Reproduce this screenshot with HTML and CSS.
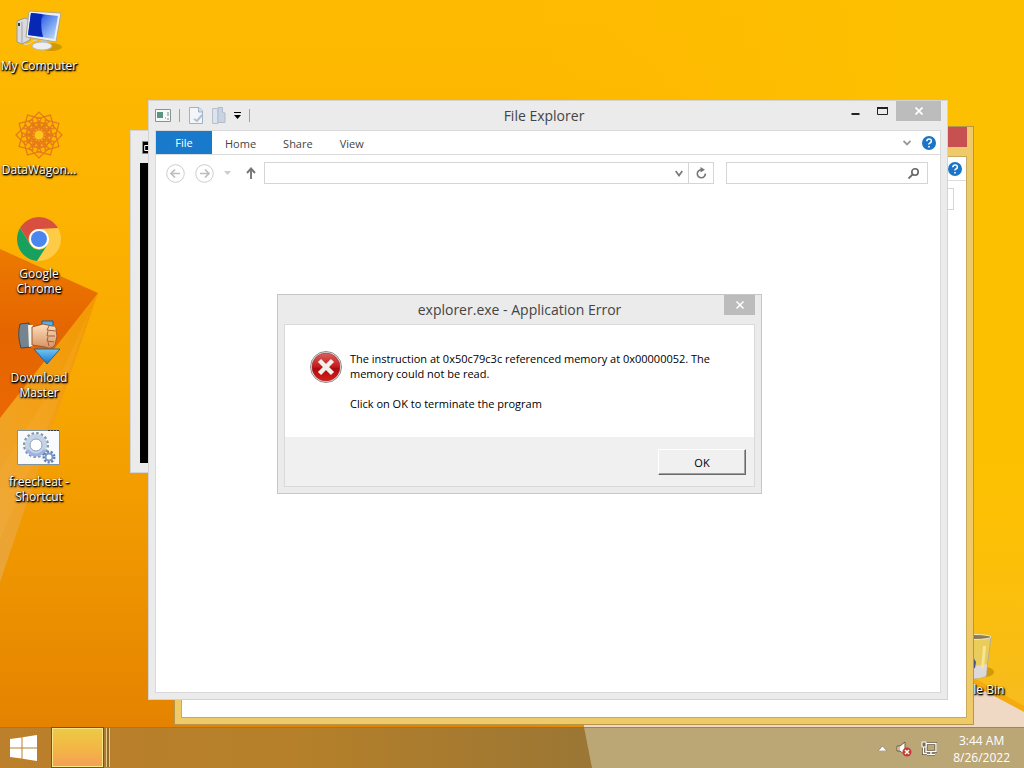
FILE: index.html
```html
<!DOCTYPE html>
<html lang="en">
<head>
<meta charset="utf-8">
<title>Desktop</title>
<link rel="stylesheet" href="styles.css">
</head>
<body>
<main class="desktop">
  <svg class="wallpaper" viewBox="0 0 1024 768" preserveAspectRatio="none" aria-hidden="true">
    <defs>
      <linearGradient id="base" x1="0" y1="0" x2="0" y2="1"><stop offset="0" stop-color="#feba00"/><stop offset=".25" stop-color="#fdb400"/><stop offset=".5" stop-color="#f8a800"/><stop offset=".75" stop-color="#ee9400"/><stop offset="1" stop-color="#e27e00"/></linearGradient>
      <linearGradient id="bright" x1="0" y1="0" x2="1" y2="0"><stop offset=".5" stop-color="#fdbd00" stop-opacity="0"/><stop offset=".88" stop-color="#fdc000"/></linearGradient>
      <linearGradient id="fold" x1="0" y1="0" x2="0" y2="1"><stop offset="0" stop-color="#ec7a00"/><stop offset=".5" stop-color="#e56500"/><stop offset="1" stop-color="#e96804"/></linearGradient>
      <linearGradient id="beam" x1="1" y1="0" x2="0" y2="1"><stop offset="0" stop-color="#f29800"/><stop offset=".6" stop-color="#f3a11b"/><stop offset="1" stop-color="#e9a53a"/></linearGradient>
      <linearGradient id="corner" x1="0" y1="0" x2="0" y2="1"><stop offset="0" stop-color="#fcc200" stop-opacity="0"/><stop offset="1" stop-color="#f5b92c"/></linearGradient>
    </defs>
    <rect width="1024" height="768" fill="url(#base)"/>
    <rect width="1024" height="768" fill="url(#bright)"/>
    <path d="M900 400H1024V768H900z" fill="url(#corner)"/>
    <path d="M98 293L0 418V582z" fill="url(#beam)"/>
    <path d="M94 301L62 372 0 470V540L57 405z" fill="#ffc45a" opacity=".12"/>
    <path d="M0 249L98 293 0 418z" fill="url(#fold)"/>
    <path d="M960 670L1024 706V712L960 678z" fill="#f4ab10"/>
    <path d="M960 678L1024 712V768H584V724H960z" fill="#efd9c4"/>
  </svg>

  <nav class="shortcuts" aria-label="Desktop shortcuts">
    <a class="shortcut" href="#">
      <svg class="shortcut-icon" viewBox="0 0 48 48" aria-hidden="true">
        <defs><linearGradient id="scr" x1="0" y1="0" x2="1" y2=".8"><stop offset="0" stop-color="#0722a4"/><stop offset=".35" stop-color="#123be0"/><stop offset=".4" stop-color="#3f6ee8"/><stop offset="1" stop-color="#b5d6fc"/></linearGradient></defs>
        <ellipse cx="36" cy="39" rx="11" ry="4" fill="#a87800" opacity=".5"/>
        <path d="M2 13L10 10 15 12V32L7 36 2 34z" fill="#d9dade" stroke="#9a9a9c"/><path d="M7 14V35" stroke="#a4a4a8"/><path d="M4 15v3" stroke="#4b3a22" stroke-width="2"/>
        <path d="M9 36C15 38 16 32 22 32" fill="none" stroke="#ddd"/>
        <path d="M26 31L32 32V38H25z" fill="#c7cad2"/><ellipse cx="27" cy="38" rx="10" ry="4" fill="#eceef2" stroke="#b6b7bc"/>
        <path d="M14 3L46 5 41 34 11 29z" fill="#eceef2" stroke="#b1a882"/>
        <path d="M16 5L43 8 39 31 13 27z" fill="url(#scr)"/><path d="M16 5L27 6Q25 18 28 29L13 27z" fill="#0728b4"/>
      </svg>
      <span class="shortcut-label">My Computer</span>
    </a>
    <a class="shortcut" href="#">
      <svg class="shortcut-icon" viewBox="-24 -23 48 48" aria-hidden="true">
        <defs><g id="petal" fill="none" stroke="#e5791c" stroke-width="1.2"><path d="M-10 -13L0 -23L10 -13L0 -7z"/><path d="M-6 -10L0 -14L6 -10L0 -4z"/></g></defs>
        <use href="#petal"/><use href="#petal" transform="rotate(30)"/><use href="#petal" transform="rotate(60)"/><use href="#petal" transform="rotate(90)"/><use href="#petal" transform="rotate(120)"/><use href="#petal" transform="rotate(150)"/><use href="#petal" transform="rotate(180)"/><use href="#petal" transform="rotate(210)"/><use href="#petal" transform="rotate(240)"/><use href="#petal" transform="rotate(270)"/><use href="#petal" transform="rotate(300)"/><use href="#petal" transform="rotate(330)"/>
        <circle r="4.500" fill="#ffc41c"/>
      </svg>
      <span class="shortcut-label">DataWagon...</span>
    </a>
    <a class="shortcut" href="#">
      <svg class="shortcut-icon" viewBox="-24 -23 48 48" aria-hidden="true">
        <circle r="22" fill="#fdcb45"/>
        <path d="M-19 -11A22 22 0 0 1 19 -11L0 -10A10 10 0 0 0 -9 5z" fill="#d94f3f"/>
        <path d="M-19 -11A22 22 0 0 0 -2 22L9 5A10 10 0 0 1 -9 5z" fill="#17a05e"/>
        <circle r="10" fill="#fff"/><circle r="8" fill="#4a86ee"/>
      </svg>
      <span class="shortcut-label">Google Chrome</span>
    </a>
    <a class="shortcut" href="#">
      <svg class="shortcut-icon" viewBox="0 7 48 48" aria-hidden="true">
        <defs><linearGradient id="hand" x1="0" y1="0" x2="0" y2="1"><stop offset="0" stop-color="#fbe0bd"/><stop offset="1" stop-color="#d99262"/></linearGradient><linearGradient id="arr" x1="0" y1="0" x2="0" y2="1"><stop offset="0" stop-color="#72c7f5"/><stop offset="1" stop-color="#1873c9"/></linearGradient></defs>
        <path d="M27 8H38V15H27z" fill="#4fb0ea" stroke="#285985"/>
        <path d="M19 36H45L32 51z" fill="url(#arr)" stroke="#28648c"/>
        <path d="M5 11L14 10 16 34 6 35Q2 22 5 11z" fill="#75858f" stroke="#3f4a51"/><path d="M13 12L18 12V33L14 34z" fill="#f7f2e8"/>
        <path d="M17 14L28 11 37 13Q42 12 41 18L42 23 40 32Q36 37 30 34L17 32z" fill="url(#hand)" stroke="#9c5732"/>
        <path d="M34 13l-2 4 8 1M33 18l-1 5 8 0M33 24l-1 4 7 1M33 29l1 4" fill="none" stroke="#a05c38"/>
      </svg>
      <span class="shortcut-label">Download Master</span>
    </a>
    <a class="shortcut" href="#">
      <svg class="shortcut-icon" viewBox="0 -1 48 48" aria-hidden="true">
        <path d="M2.500 5.500H44.500V39.500H2.500z" fill="#f8fafb" stroke="#8195a0"/><path d="M33 5.500h12" stroke="#333" stroke-dasharray="2 1"/>
        <circle cx="21" cy="20" r="11.500" fill="none" stroke="#8196a8" stroke-width="3" stroke-dasharray="2.500 2"/>
        <circle cx="21" cy="20" r="8.500" fill="none" stroke="#c5d3e6" stroke-width="5"/><circle cx="21" cy="20" r="6" fill="#fff" stroke="#8da0b8"/>
        <path d="M12 25Q21 35 30 25" stroke="#9fb0e6" stroke-width="3" fill="none"/>
        <circle cx="34" cy="32" r="5" fill="none" stroke="#6680ad" stroke-width="3" stroke-dasharray="2 1.500"/><circle cx="34" cy="32" r="3.500" fill="#fff" stroke="#7b9bc9" stroke-width="2"/>
      </svg>
      <span class="shortcut-label">freecheat - Shortcut</span>
    </a>
  </nav>

  <a class="shortcut recycle" href="#">
    <svg class="shortcut-icon" viewBox="0 0 48 48" aria-hidden="true">
      <ellipse cx="36" cy="40" rx="9" ry="5" fill="#a87700" opacity=".5"/>
      <path d="M7 5H42L37 44Q25 49 12 44z" fill="#e9cc5c" stroke="#b8ae8c"/><path d="M11 32L26 34 38 32 37 44Q25 49 12 44z" fill="#dcd8dc"/>
      <path d="M34 14L37 14 35 36 32 37z" fill="#f8e58c"/><ellipse cx="25" cy="5" rx="17" ry="2.500" fill="#8d7b50" stroke="#eee7d4"/>
      <path d="M24 25L27 30 26 36 23 37z" fill="#4a5282"/>
    </svg>
    <span class="shortcut-label">Recycle Bin</span>
  </a>

  <section class="window console" aria-label="Console">
    <header class="console-title">
      <svg width="13" height="13" viewBox="0 0 13 13" aria-hidden="true"><path d="M.5.500H12.500V12.500H.5z" stroke="#888"/><path d="M6 4.500H2.700V9.500H6M8 5v1M8 8v1" stroke="#fff" fill="none"/></svg>
    </header>
    <div class="console-screen"></div>
  </section>

  <section class="window back" aria-label="File Explorer, background">
    <header class="back-title"><button class="close close-red" aria-label="Close"></button></header>
    <div class="back-body">
      <div class="back-ribbon"><button class="plain" aria-label="Help"><svg width="14" height="14" viewBox="0 0 14 14" aria-hidden="true"><circle cx="7" cy="7" r="7" fill="#1b74c5"/><path d="M4.800 5.200Q5 3 7.200 3T9.300 5.200Q9.300 6.300 8 7T7 8.600M7 10v1.500" fill="none" stroke="#fff" stroke-width="1.600"/></svg></button></div>
      <div class="back-address"><input class="field back-search" aria-label="Search"></div>
    </div>
  </section>

  <section class="window explorer" aria-labelledby="explorer-title">
    <header class="titlebar">
      <div class="quick">
        <svg width="16" height="13" viewBox="0 0 16 13" aria-hidden="true"><path d="M.5.500H15.500V12.500H.5z" fill="#f7f9f8" stroke="#82968d"/><path d="M2 3H8V9H2z" fill="#5c947e"/><path d="M10 9h1M13 3v4M12 10h2" stroke="#7c8c86"/></svg>
        <span class="divider"></span>
        <button class="plain" aria-label="Properties"><svg width="16" height="17" viewBox="0 0 16 17" aria-hidden="true"><path d="M1.500.500H11L14.500 4V16.500H1.500z" fill="#f2f5f9" stroke="#a3b1c4"/><path d="M10.500 1V5H14" fill="#d0dae8" stroke="#a3b1c4"/><path d="M6 12l3 2 5-6" fill="none" stroke="#b4bfd0" stroke-width="2"/></svg></button>
        <button class="plain" aria-label="New folder"><svg width="14" height="17" viewBox="0 0 14 17" aria-hidden="true"><path d="M.5 1.500H6V16.500H.5z" fill="#dce3ed" stroke="#b6c0cf"/><path d="M6 .5H10.500V5L13 6V15.500H6z" fill="#cad3e2" stroke="#b1bccc"/></svg></button>
        <button class="plain" aria-label="Customize toolbar"><svg width="7" height="7" viewBox="0 0 7 7" aria-hidden="true"><path d="M0 .5H7" stroke="#000"/><path d="M0 3H7L3.500 7z"/></svg></button>
        <span class="divider"></span>
      </div>
      <h1 class="title" id="explorer-title">File Explorer</h1>
      <div class="controls">
        <button class="control" aria-label="Minimize"><svg width="11" height="10" viewBox="0 0 11 10" aria-hidden="true"><path d="M1.500 8H9.500" stroke="#222" stroke-width="2"/></svg></button>
        <button class="control" aria-label="Maximize"><svg width="11" height="8" viewBox="0 0 11 8" aria-hidden="true"><path d="M.5 1H10.500V7.500H.5z" fill="none" stroke="#222"/><path d="M0 1H11" stroke="#222" stroke-width="2"/></svg></button>
        <button class="close" aria-label="Close"><svg width="8" height="8" viewBox="0 0 8 8" aria-hidden="true"><path d="M.5.500L7.500 7.500M7.500.500L.5 7.500" stroke="#fff" stroke-width="1.700"/></svg></button>
      </div>
    </header>
    <div class="explorer-body">
      <nav class="ribbon" aria-label="Ribbon">
        <button class="tab tab-file">File</button>
        <button class="tab">Home</button>
        <button class="tab">Share</button>
        <button class="tab">View</button>
        <div class="ribbon-end">
          <button class="plain" aria-label="Expand ribbon"><svg width="8" height="6" viewBox="0 0 8 6" aria-hidden="true"><path d="M.5 1L4 4.500 7.500 1" fill="none" stroke="#999" stroke-width="1.800"/></svg></button>
          <button class="plain" aria-label="Help"><svg width="14" height="14" viewBox="0 0 14 14" aria-hidden="true"><circle cx="7" cy="7" r="7" fill="#1b74c5"/><path d="M4.800 5.200Q5 3 7.200 3T9.300 5.200Q9.300 6.300 8 7T7 8.600M7 10v1.500" fill="none" stroke="#fff" stroke-width="1.600"/></svg></button>
        </div>
      </nav>
      <div class="navbar">
        <button class="plain" aria-label="Back"><svg width="19" height="19" viewBox="0 0 19 19" aria-hidden="true"><circle cx="9.500" cy="9.500" r="8.800" fill="#fff" stroke="#ccc"/><path d="M14 9.500H5.500M9 5.500L5 9.500 9 13.500" fill="none" stroke="#bdbdbd" stroke-width="1.700"/></svg></button>
        <button class="plain" aria-label="Forward"><svg width="19" height="19" viewBox="0 0 19 19" aria-hidden="true"><circle cx="9.500" cy="9.500" r="8.800" fill="#fff" stroke="#ccc"/><path d="M5 9.500H13.500M10 5.500L14 9.500 10 13.500" fill="none" stroke="#bdbdbd" stroke-width="1.700"/></svg></button>
        <button class="plain" aria-label="Recent locations"><svg width="7" height="4" viewBox="0 0 7 4" aria-hidden="true"><path d="M0 0H7L3.500 4z" fill="#ccc"/></svg></button>
        <button class="plain up" aria-label="Up"><svg width="10" height="12" viewBox="0 0 10 12" aria-hidden="true"><path d="M5 12V1.500M1 6L5 1.500 9 6" fill="none" stroke="#777" stroke-width="1.900"/></svg></button>
        <div class="address">
          <input class="address-input" aria-label="Address">
          <button class="plain address-drop" aria-label="Previous locations"><svg width="8" height="7" viewBox="0 0 8 7" aria-hidden="true"><path d="M.7 1L4 5.500 7.300 1" fill="none" stroke="#777" stroke-width="1.700"/></svg></button>
          <button class="plain refresh" aria-label="Refresh"><svg width="11" height="12" viewBox="0 0 11 12" aria-hidden="true"><path d="M9.300 6.500A4 4 0 1 1 5.500 2.800" fill="none" stroke="#777" stroke-width="1.600"/><path d="M4.500 0L9 2.800 4.500 5.500z" fill="#777"/></svg></button>
        </div>
        <div class="search">
          <input class="address-input" aria-label="Search">
          <button class="plain" aria-label="Search"><svg width="11" height="11" viewBox="0 0 11 11" aria-hidden="true"><circle cx="7" cy="4" r="3.200" fill="none" stroke="#666" stroke-width="1.600"/><path d="M4.700 6.300L.5 10.500" stroke="#666" stroke-width="1.800"/></svg></button>
        </div>
      </div>
    </div>
  </section>

  <section class="window dialog" role="alertdialog" aria-labelledby="error-title">
    <header class="titlebar">
      <span></span>
      <h2 class="title" id="error-title">explorer.exe - Application Error</h2>
      <div class="controls"><button class="close close-small" aria-label="Close"><svg width="8" height="8" viewBox="0 0 8 8" aria-hidden="true"><path d="M.5.500L7.500 7.500M7.500.500L.5 7.500" stroke="#fff" stroke-width="1.500"/></svg></button></div>
    </header>
    <div class="dialog-body">
      <div class="message">
        <svg class="error-icon" width="32" height="32" viewBox="0 0 32 32" aria-hidden="true"><defs><linearGradient id="red" x1="0" y1="0" x2="0" y2="1"><stop offset="0" stop-color="#d9605c"/><stop offset=".5" stop-color="#c41b1c"/><stop offset=".55" stop-color="#ad0a0c"/><stop offset="1" stop-color="#d8201c"/></linearGradient></defs><circle cx="16" cy="16" r="15.500" fill="#eee" stroke="#8b8b8b"/><circle cx="16" cy="16" r="14" fill="url(#red)" stroke="#a02020" stroke-width=".5"/><path d="M9.500 9.500L22.500 22.500M22.500 9.500L9.500 22.500" stroke="#f1f1ec" stroke-width="4.500"/></svg>
        <div class="message-text">
          <p>The instruction at 0x50c79c3c referenced memory at 0x00000052. The memory could not be read.</p>
          <p>Click on OK to terminate the program</p>
        </div>
      </div>
      <footer class="dialog-footer"><button class="ok">OK</button></footer>
    </div>
  </section>
</main>

<footer class="taskbar">
  <svg class="taskbar-back" viewBox="0 0 1024 41" preserveAspectRatio="none" aria-hidden="true">
    <defs><linearGradient id="barL" x1="0" y1="0" x2="1" y2="0"><stop offset="0" stop-color="#bc7f2c"/><stop offset=".5" stop-color="#b58029"/><stop offset="1" stop-color="#9b7635"/></linearGradient></defs>
    <rect width="1024" height="41" fill="#bba676"/><path d="M0 0H584L592 41H0z" fill="url(#barL)"/><path d="M0 .5H1024" stroke="#946f35" opacity=".6"/>
  </svg>
  <button class="plain start" aria-label="Start"><svg width="27" height="26" viewBox="0 0 27 26" aria-hidden="true"><path d="M0 4L11.500 2.400V12.400H0zM12.500 2.200L27 0V12.400H12.500zM0 13.400H11.500V23.600L0 22zM12.500 13.400H27V26L12.500 23.800z" fill="#fff"/></svg></button>
  <button class="task" aria-label="File Explorer windows"></button>
  <div class="tray">
    <button class="plain" aria-label="Show hidden icons"><svg width="9" height="5" viewBox="0 0 9 5" aria-hidden="true"><path d="M0 5L4.500 0 9 5z" fill="#fff" stroke="#6c5f43" stroke-width=".5"/></svg></button>
    <button class="plain" aria-label="Volume muted"><svg width="16" height="16" viewBox="0 0 16 16" aria-hidden="true"><path d="M1 5H4L9 1V14L4 10H1z" fill="#fff" stroke="#6f5b40"/><path d="M3 5V10" stroke="#8c7c5c"/><circle cx="11" cy="11" r="4.500" fill="#c43d35"/><path d="M9 9l4 4M13 9l-4 4" stroke="#fff" stroke-width="1.500"/></svg></button>
    <button class="plain" aria-label="Network"><svg width="16" height="15" viewBox="0 0 16 15" aria-hidden="true"><path d="M5 2.500H15V10.500H5zM10 11V13.500M6 13.500H14M2.500 6V12.500H6" fill="none" stroke="#5f5238" stroke-width="3"/><path d="M5 2.500H15V10.500H5zM10 11V13.500M6 13.500H14M2.500 6V12.500H6" fill="none" stroke="#fff" stroke-width="1.400"/><path d="M1 1H5V6H1z" fill="#7b6c4c" stroke="#fff"/></svg></button>
    <time class="clock" datetime="2022-08-26T03:44">3:44 AM<br>8/26/2022</time>
  </div>
</footer>
</body>
</html>
```
FILE: styles.css
```css
* { box-sizing: border-box; }
body { margin: 0; height: 100vh; overflow: hidden; font: 11px/15px "Open Sans", "Noto Sans", sans-serif; color: #000; background: #feba00; }
button, input { font: inherit; color: inherit; border: 0; padding: 0; margin: 0; background: none; border-radius: 0; min-width: 0; }
svg { display: block; flex: none; }
h1, h2, p { margin: 0; font-weight: 400; }

.desktop { position: absolute; inset: 0; }
.wallpaper { position: absolute; inset: 0; width: 100%; height: 100%; }
.shortcuts { position: relative; display: flex; flex-direction: column; width: 78px; padding-top: 8px; }
.shortcut { display: flex; flex-direction: column; align-items: center; gap: 2px; height: 104px; color: #fff; text-align: center; text-decoration: none; }
.shortcut-icon { width: 48px; height: 48px; overflow: visible; }
.shortcut-label { width: 78px; font-size: 12px; line-height: 15px; text-shadow: 1px 1px 2px #000, 0 1px 2px #000, 1px 1px 1px #000; }
.recycle { position: absolute; right: 12px; bottom: 32px; width: 78px; }

.window { position: absolute; display: flex; flex-direction: column; background: #ebebeb; border: 1px solid #d3d3d3; }
.console { left: 130px; top: 130px; width: 677px; height: 343px; padding: 0 9px 9px; }
.console-title { display: flex; align-items: center; height: 32px; padding-left: 2px; }
.console-screen { flex: 1; background: #000; }

.back { inset: 126px 50px 43px 174px; padding: 0 6px 6px; background: #efca69; border-color: #b6954c; }
.back-title { display: flex; justify-content: flex-end; height: 29px; }
.back-body { flex: 1; background: #fff; border: 1px solid #c8a95d; }
.back-ribbon { display: flex; align-items: center; justify-content: flex-end; height: 24px; padding-right: 4px; border-bottom: 1px solid #ddd; }
.back-address { display: flex; justify-content: flex-end; padding: 7px 12px; }
.field { border: 1px solid #d5d5d5; background: #fff; }
.back-search { width: 200px; height: 22px; }

.explorer { inset: 100px 76px 68px 148px; padding: 0 6px 6px; }
.titlebar { display: grid; grid-template-columns: 1fr auto 1fr; height: 29px; }
.quick { display: flex; align-items: center; gap: 8px; }
.divider { width: 1px; height: 13px; background: #a0a0a0; }
.title { padding-right: 8px; font-size: 14px; line-height: 29px; color: #444; white-space: nowrap; }
.controls { display: flex; justify-content: flex-end; align-items: flex-start; }
.control { display: grid; place-items: center; width: 27px; height: 20px; }
.close { display: grid; place-items: center; width: 45px; height: 20px; background: #bcbcbc; }
.close-red { background: #c75050; }
.close-small { width: 31px; }
.plain { display: grid; place-items: center; }

.explorer-body { flex: 1; background: #fff; border: 1px solid #d9d9d9; }
.ribbon { display: flex; height: 24px; border-bottom: 1px solid #dadada; }
.tab { padding: 2px 14px 0 13px; line-height: 22px; color: #444; }
.tab-file { width: 56px; padding: 0; color: #fff; background: #1979ca; }
.ribbon-end { display: flex; align-items: center; gap: 11px; margin-left: auto; padding-right: 4px; }
.navbar { display: flex; align-items: center; gap: 10px; padding: 7px 12px 7px 10px; }
.up { margin: 0 -2px 0 5px; }
.address { display: flex; flex: 1; height: 22px; border: 1px solid #d5d5d5; }
.address-input { flex: 1; width: 0; }
.address-drop { width: 18px; }
.refresh { width: 25px; border-left: 1px solid #d5d5d5; }
.search { display: flex; width: 202px; height: 22px; margin-left: 2px; padding-right: 8px; border: 1px solid #d5d5d5; }

.dialog { left: 277px; top: 294px; width: 485px; padding: 0 6px 6px; border-color: #c6c6c6; }
.dialog .title { padding: 0; }
.dialog-body { border: 1px solid #d9d9d9; background: #fff; }
.message { display: flex; gap: 8px; padding: 26px 26px 26px 25px; }
.message-text { display: grid; gap: 15px; }
.dialog-footer { display: flex; justify-content: flex-end; padding: 12px 8px 11px; background: #f0f0f0; }
.ok { width: 88px; height: 26px; background: #f0f0f0; border: 1px solid; border-color: #fff #696969 #696969 #fff; box-shadow: inset -1px -1px #a0a0a0; }

.taskbar { position: absolute; left: 0; right: 0; bottom: 0; height: 41px; display: flex; align-items: center; }
.taskbar-back { position: absolute; inset: 0; width: 100%; height: 100%; }
.start, .task, .tray { position: relative; }
.start { width: 52px; height: 41px; padding-right: 5px; }
.task { width: 51px; height: 39px; background: linear-gradient(#ecca45, #f4b345 60%, #f3a057); border: 1px solid #fbe487; outline: 1px solid #76531f; box-shadow: 3px 0 #a87c36, 4px 0 #e8c984, 6px 0 #8f6b30, 7px 0 #e8c984; }
.tray { display: flex; align-items: center; gap: 9px; margin-left: auto; padding: 2px 14px 0 0; color: #fff; }
.clock { margin-left: 7px; font-size: 12px; line-height: 17px; text-align: center; }
```
